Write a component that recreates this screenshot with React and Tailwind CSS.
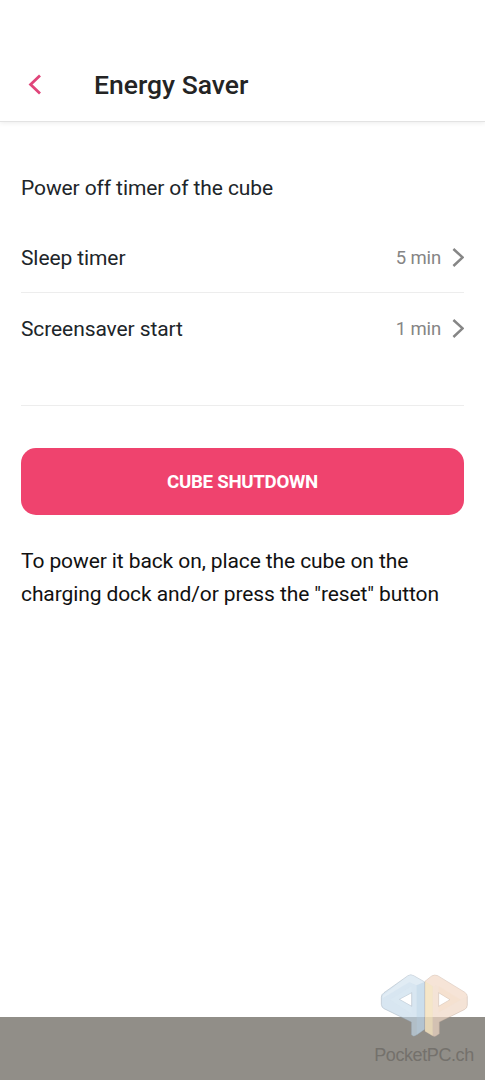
const timers = [
	{ label: "Sleep timer", value: "5 min" },
	{ label: "Screensaver start", value: "1 min" },
];

const BackIcon = () => (
	<svg width="14" height="22" viewBox="0 0 14 22" fill="none">
		<path d="M13 1.6 3.6 10.6l9.4 8.8" stroke="#e0457a" strokeWidth="2.8" />
	</svg>
);

const ChevronIcon = () => (
	<svg width="12" height="20" viewBox="0 0 12 20" fill="none">
		<path d="M1.4 1 10.6 9.4 1.4 18" stroke="#868686" strokeWidth="2.5" />
	</svg>
);

const TimerRow = ({ label, value }) => (
	<button type="button" className="flex w-full items-center text-left">
		<span className="flex-1 text-[21px] leading-7 tracking-[-0.1px] text-[#202529]">{label}</span>
		<span className="mr-[11px] text-[18.5px] leading-7 tracking-[-0.15px] text-[#858585]">{value}</span>
		<ChevronIcon />
	</button>
);

const Watermark = () => (
	<div className="absolute right-[10px] bottom-[13px] flex w-[102px] flex-col items-center">
		<svg width="90" height="66" viewBox="40 25 270 198" strokeLinejoin="round">
			{/* Blue half */}
			<g stroke="#8d9baa" strokeOpacity="0.45" strokeWidth="2.5">
				<path
					d="M55 84 127 33q8-5 17 0l33 19v142l-28 19q-6 4-12-3v-38L55 132q-8-4-8-13V98q0-9 8-14ZM101 104l37 21V84Z"
					fill="#c3d8e9"
					fillOpacity="0.65"
					fillRule="evenodd"
				/>
				<path d="m50 94 77-61q8-5 17 0l33 19-24 10-22-9-79 47Z" fill="#e9f2f8" fillOpacity="0.5" stroke="none" />
				<path d="m153 62 24-10v142l-24 18Z" fill="#b5cde1" fillOpacity="0.35" stroke="none" />
				<path d="m73 105 65-41v20l-37 20 37 21v23Z" fill="#dbe9f4" fillOpacity="0.5" stroke="none" />
			</g>
			{/* Orange half */}
			<g stroke="#b9a595" strokeOpacity="0.45" strokeWidth="2.5">
				<path
					d="m178 50 20-16q9-5 18-1l80 49q9 5 9 14v26q0 8-9 13l-75 37v35l-10 7q-5 3-11-1l-22-13ZM219 84v41l34-20Z"
					fill="#efd7c5"
					fillOpacity="0.7"
					fillRule="evenodd"
				/>
				<path d="m178 50 20-16q9-5 18-1l80 49q9 5 9 14l-25 9-70-43-9 3Z" fill="#f9e5da" fillOpacity="0.4" stroke="none" />
				<path d="m178 50 23 15v148l-23-13Z" fill="#f6e9ba" fillOpacity="0.5" stroke="none" />
				<path d="m219 65 66 40-66 38v-18l34-20-34-21Z" fill="#f6dfc9" fillOpacity="0.5" stroke="none" />
			</g>
		</svg>
		<div className="mt-1 font-['Liberation_Sans',sans-serif] text-[18px] leading-6 tracking-[-0.4px] whitespace-nowrap text-[#74716c]">
			PocketPC.ch
		</div>
	</div>
);

const App = () => {
	return (
		<div className="relative flex h-[1080px] w-[485px] flex-col overflow-hidden bg-white font-['Roboto',sans-serif]">
			{/* Header */}
			<header className="flex h-[122px] items-end border-b border-[#e3e3e3] pb-5 pl-[27px] shadow-[0_1px_5px_rgba(0,0,0,0.08)]">
				<div className="flex h-8 items-center">
					<button type="button" aria-label="Back">
						<BackIcon />
					</button>
					<h1 className="ml-[53px] text-[26.5px] leading-8 font-medium text-[#242424]">
						Energy Saver
					</h1>
				</div>
			</header>

			{/* Settings */}
			<main className="flex-1 px-[21px] pt-[52px]">
				<h2 className="text-[21px] leading-7 tracking-[-0.1px] text-[#202529]">
					Power off timer of the cube
				</h2>
				<div className="mt-[35px]">
					<div className="h-[56px] border-b border-[#ededed] pt-[7px]">
						<TimerRow {...timers[0]} />
					</div>
					<div className="h-[113px] border-b border-[#ededed] pt-[22px]">
						<TimerRow {...timers[1]} />
					</div>
				</div>
				<button
					type="button"
					className="mt-[42px] h-[67px] w-full rounded-[15px] bg-[#ef436e] pt-0.5 text-[18.7px] font-bold tracking-[-0.3px] text-white"
				>
					CUBE SHUTDOWN
				</button>
				<p className="mt-[30px] text-[21px] leading-[33px] tracking-[-0.1px] whitespace-nowrap text-[#111]">
					To power it back on, place the cube on the
					<br />
					charging dock and/or press the "reset" button
				</p>
			</main>

			{/* System navigation bar */}
			<footer className="h-[63px] bg-[#918e88]" />
			<Watermark />
		</div>
	);
};

export default App;
